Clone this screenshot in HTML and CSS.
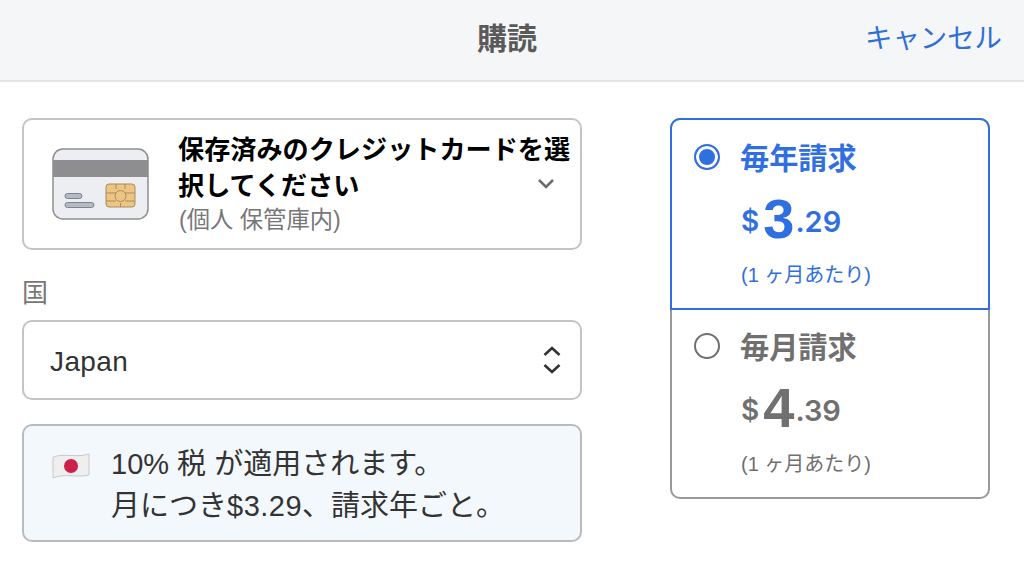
FILE: index.html
```html
<!DOCTYPE html>
<html lang="ja">
<head>
    <meta charset="UTF-8">
    <meta name="viewport" content="width=device-width, initial-scale=1.0">
    <title>購読</title>
    <link rel="stylesheet" href="styles.css">
</head>
<body>
    <header class="topbar">
        <h1>購読</h1>
        <a class="cancel" href="#">キャンセル</a>
    </header>
    <main class="content">
        <div class="left">
            <div class="card-select">
                <svg class="card-icon" width="98" height="72" viewBox="0 0 98 72">
                    <rect x="1" y="1" width="95" height="70" rx="10" fill="#eceef2" stroke="#8e8e90" stroke-width="1.5"/>
                    <rect x="1" y="12" width="95" height="17" fill="#8e8e90"/>
                    <rect x="13" y="45.500" width="17" height="5" rx="2.500" fill="#b5bac8" stroke="#7f8288"/>
                    <rect x="13" y="54.500" width="29" height="5" rx="2.500" fill="#b5bac8" stroke="#7f8288"/>
                    <rect x="54" y="36" width="29" height="23" rx="3" fill="#ecc583" stroke="#a98c5c"/>
                    <path d="M54 45h10M73 45h10M54 53h10M73 53h10M64 36v5M73 36v5M68.500 59v-4" stroke="#a98c5c" fill="none"/>
                    <circle cx="68.500" cy="48" r="5.500" fill="none" stroke="#a98c5c"/>
                </svg>
                <div class="card-text">
                    <div class="card-title">保存済みのクレジットカードを選択してください</div>
                    <div class="card-sub">(個人 保管庫内)</div>
                </div>
                <svg class="chevron" width="18" height="11" viewBox="0 0 18 11">
                    <path d="M2 2l7 7 7-7" fill="none" stroke="#6b6b6b" stroke-width="2.500"/>
                </svg>
            </div>
            <label class="field-label">国</label>
            <div class="country">
                <span>Japan</span>
                <svg width="18" height="30" viewBox="0 0 18 30">
                    <path d="M1.500 10l7.500-7 7.500 7M1.500 20l7.500 7 7.500-7" fill="none" stroke="#333" stroke-width="2.600"/>
                </svg>
            </div>
            <div class="notice">
                <svg class="flag" width="38" height="28" viewBox="0 0 38 28">
                    <path d="M1 6c12-4 24 1 36-3v21c-12 3-24-2-36 3z" fill="#efefef" stroke="#c8c8c8"/>
                    <circle cx="19" cy="15" r="7" fill="#cc2149"/>
                </svg>
                <div class="notice-text">
                    <p>10% 税 が適用されます。</p>
                    <p>月につき<span class="amount">$3.29</span>、請求年ごと。</p>
                </div>
            </div>
        </div>
        <div class="plans">
            <div class="plan active">
                <span class="radio"></span>
                <div class="plan-body">
                    <div class="plan-name">毎年請求</div>
                    <div class="price"><span class="cur">$</span><span class="big">3</span><span class="cents">.29</span></div>
                    <div class="per">(1 ヶ月あたり)</div>
                </div>
            </div>
            <div class="plan">
                <span class="radio"></span>
                <div class="plan-body">
                    <div class="plan-name">毎月請求</div>
                    <div class="price"><span class="cur">$</span><span class="big">4</span><span class="cents">.39</span></div>
                    <div class="per">(1 ヶ月あたり)</div>
                </div>
            </div>
        </div>
    </main>
</body>
</html>
```

FILE: styles.css
```css
* {
    box-sizing: border-box;
}
body {
    margin: 0;
    font-family: "Liberation Sans", "Noto Sans CJK JP", sans-serif;
    background: #fff;
    color: #333;
    overflow: hidden;
}
.topbar {
    height: 82px;
    background: #f5f6f7;
    border-bottom: 2px solid #e3e4e6;
    display: flex;
    align-items: center;
    justify-content: center;
    position: relative;
    padding: 0 10px 9px 0;
}
.topbar h1 {
    margin: 0;
    font-size: 30px;
    font-weight: 700;
    color: #5a5a5a;
}
.cancel {
    position: absolute;
    right: 22px;
    top: 16px;
    font-size: 27.400px;
    color: #2f6fd6;
    text-decoration: none;
}
.content {
    display: flex;
    justify-content: space-between;
    padding: 36px 34px 0 22px;
}
.left {
    width: 560px;
}
.card-select {
    height: 132px;
    border: 2px solid #c4c4c4;
    border-radius: 10px;
    display: flex;
    align-items: center;
    padding-left: 28px;
}
.card-icon {
    flex: none;
    margin-right: 28px;
}
.card-text {
    width: 396px;
    flex: none;
}
.card-title {
    font-size: 26.150px;
    line-height: 36px;
    font-weight: 700;
    color: #000;
}
.card-sub {
    font-size: 23.300px;
    line-height: 32px;
    color: #777;
    padding-left: 1px;
}
.chevron {
    margin: 0 0 2px -37px;
}
.field-label {
    display: block;
    font-size: 26px;
    line-height: 34px;
    color: #777;
    margin: 26px 0 10px;
}
.country {
    height: 80px;
    border: 2px solid #c4c4c4;
    border-radius: 10px;
    display: flex;
    align-items: center;
    justify-content: space-between;
    padding: 0 19px 0 26px;
    font-size: 28px;
    letter-spacing: 0.400px;
}
.country span {
    padding-top: 3px;
}
.notice {
    height: 118px;
    margin-top: 24px;
    border: 2px solid #b8bcc0;
    border-radius: 10px;
    background: #f3f8fd;
    display: flex;
    padding: 17px 0 0 28px;
}
.flag {
    flex: none;
    margin: 8px 21px 0 0;
}
.notice-text p {
    margin: 0;
    font-size: 29px;
    line-height: 42px;
    color: #333;
}
.amount {
    letter-spacing: 0.500px;
}
.plans {
    width: 320px;
    height: 381px;
    border: 2px solid #999;
    border-radius: 10px;
}
.plan {
    height: 189px;
    display: flex;
    padding: 21px 0 0 22px;
    color: #707070;
}
.plan.active {
    color: #2f6fe0;
    height: 192px;
    padding-top: 22px;
    border: 2px solid #2f6fe0;
    border-radius: 10px 10px 0 0;
    margin: -2px -2px 0;
    width: 320px;
}
.radio {
    flex: none;
    width: 26px;
    height: 26px;
    border: 2px solid #707070;
    border-radius: 50%;
    margin: 2px 20px 0 0;
}
.active .radio {
    border-color: #2f6fe0;
    background: #2f6fe0;
    box-shadow: inset 0 0 0 3px #fff;
}
.plan-name {
    font-size: 29.200px;
    line-height: 34px;
    font-weight: 700;
}
.price {
    margin-top: 17px;
    display: flex;
    align-items: center;
    font-weight: 700;
    height: 52px;
}
.cur {
    font-family: Inter, sans-serif;
    font-weight: 600;
    font-size: 28px;
    padding-top: 4px;
    margin: 0 4px 0 1px;
}
.big {
    font-size: 56px;
    line-height: 52px;
}
.cents {
    font-family: Inter, sans-serif;
    font-weight: 600;
    font-size: 29px;
    padding-top: 4px;
    margin-left: 1px;
}
.per {
    margin-top: 18px;
    font-size: 20px;
    line-height: 24px;
    padding-left: 1px;
}
```
